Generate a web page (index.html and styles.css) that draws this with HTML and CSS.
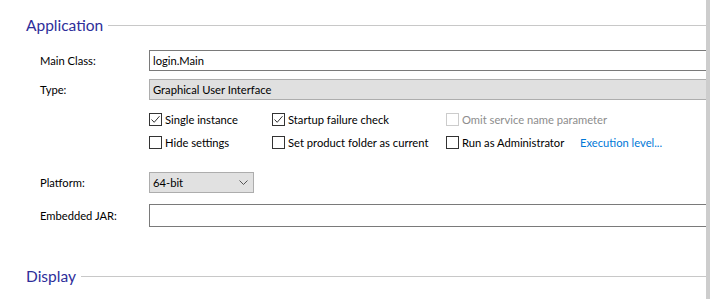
FILE: index.html
```html
<!DOCTYPE html>
<html lang="en">
<head>
    <meta charset="UTF-8">
    <title>Application</title>
    <link rel="stylesheet" href="styles.css">
</head>
<body>
    <div class="page">
        <div class="content">
            <div class="section-title">
                <span>Application</span>
                <div class="rule"></div>
            </div>

            <div class="form">
                <div class="row row-main">
                    <label class="label">Main Class:</label>
                    <div class="field">login.Main</div>
                </div>
                <div class="row row-type">
                    <label class="label">Type:</label>
                    <div class="field field-readonly">Graphical User Interface</div>
                </div>

                <div class="checks">
                    <div class="check col-1">
                        <span class="box checked"><svg viewBox="0 0 11 11"><polyline points="1.5,5.5 4.2,8.3 9.5,2.2" /></svg></span>
                        <span>Single instance</span>
                    </div>
                    <div class="check col-2">
                        <span class="box checked"><svg viewBox="0 0 11 11"><polyline points="1.5,5.5 4.2,8.3 9.5,2.2" /></svg></span>
                        <span>Startup failure check</span>
                    </div>
                    <div class="check col-3 disabled">
                        <span class="box"></span>
                        <span>Omit service name parameter</span>
                    </div>
                    <div class="check col-4"></div>

                    <div class="check col-1">
                        <span class="box"></span>
                        <span>Hide settings</span>
                    </div>
                    <div class="check col-2">
                        <span class="box"></span>
                        <span>Set product folder as current</span>
                    </div>
                    <div class="check col-3">
                        <span class="box"></span>
                        <span>Run as Administrator</span>
                    </div>
                    <div class="check col-4">
                        <a class="link" href="#">Execution level...</a>
                    </div>
                </div>

                <div class="row row-platform">
                    <label class="label">Platform:</label>
                    <div class="select">
                        <span>64-bit</span>
                        <svg viewBox="0 0 9 5"><polyline points="0.5,0.5 4.5,4.5 8.5,0.5" /></svg>
                    </div>
                </div>
                <div class="row row-jar">
                    <label class="label">Embedded JAR:</label>
                    <div class="field field-tall"></div>
                </div>
            </div>

            <div class="section-title section-display">
                <span>Display</span>
                <div class="rule"></div>
            </div>
        </div>
        <div class="scrollbar"></div>
    </div>
</body>
</html>
```

FILE: styles.css
```css
* {
    box-sizing: border-box;
    margin: 0;
    padding: 0;
}

body {
    font-family: Lato, "Noto Sans", sans-serif;
    font-size: 11.2px;
    color: #000;
    background: #fff;
    overflow: hidden;
}

.page {
    display: flex;
    width: 710px;
    height: 299px;
}

.content {
    flex: 1;
    padding-left: 26px;
}

.scrollbar {
    width: 4px;
    background: #cdcdcd;
}

.section-title {
    display: flex;
    align-items: center;
    height: 20px;
    margin-top: 15px;
    font-size: 15.5px;
    color: #2e2e9a;
}

.section-title .rule {
    flex: 1;
    height: 1px;
    margin-left: 5px;
    background: #c8c8c8;
}

.section-display {
    margin-top: 39px;
}

.form {
    padding-left: 14px;
}

.row {
    display: flex;
    align-items: center;
}

.label {
    width: 109px;
}

.field {
    flex: 1;
    height: 21px;
    border: 1px solid #7a7a7a;
    border-right: none;
    padding: 0 3px;
    line-height: 19px;
    background: #fff;
}

.field-readonly {
    background: #e0e0e0;
    border-color: #adadad;
}

.field-tall {
    height: 23px;
}

.row-main {
    margin-top: 15px;
}

.row-type {
    margin-top: 8px;
}

.checks {
    display: grid;
    grid-template-columns: 123px 174px 134px 1fr;
    grid-auto-rows: 23px;
    margin-top: 8px;
    margin-left: 109px;
}

.check {
    display: flex;
    align-items: center;
    white-space: nowrap;
}

.check .box {
    width: 13px;
    height: 13px;
    margin-right: 3px;
    border: 1px solid #333;
    background: #fff;
    flex-shrink: 0;
}

.check .box svg {
    display: block;
    width: 11px;
    height: 11px;
    fill: none;
    stroke: #333;
    stroke-width: 1;
}

.check.disabled {
    color: #8d8d8d;
}

.check.disabled .box {
    border-color: #cccccc;
}

.link {
    color: #0078d7;
    text-decoration: none;
}

.row-platform {
    margin-top: 18px;
}

.select {
    display: flex;
    align-items: center;
    justify-content: space-between;
    width: 105px;
    height: 21px;
    padding: 0 5px 0 3px;
    background: #e1e1e1;
    border: 1px solid #adadad;
}

.select svg {
    width: 9px;
    height: 5px;
    fill: none;
    stroke: #555;
    stroke-width: 1;
}

.row-jar {
    margin-top: 11px;
}
```
